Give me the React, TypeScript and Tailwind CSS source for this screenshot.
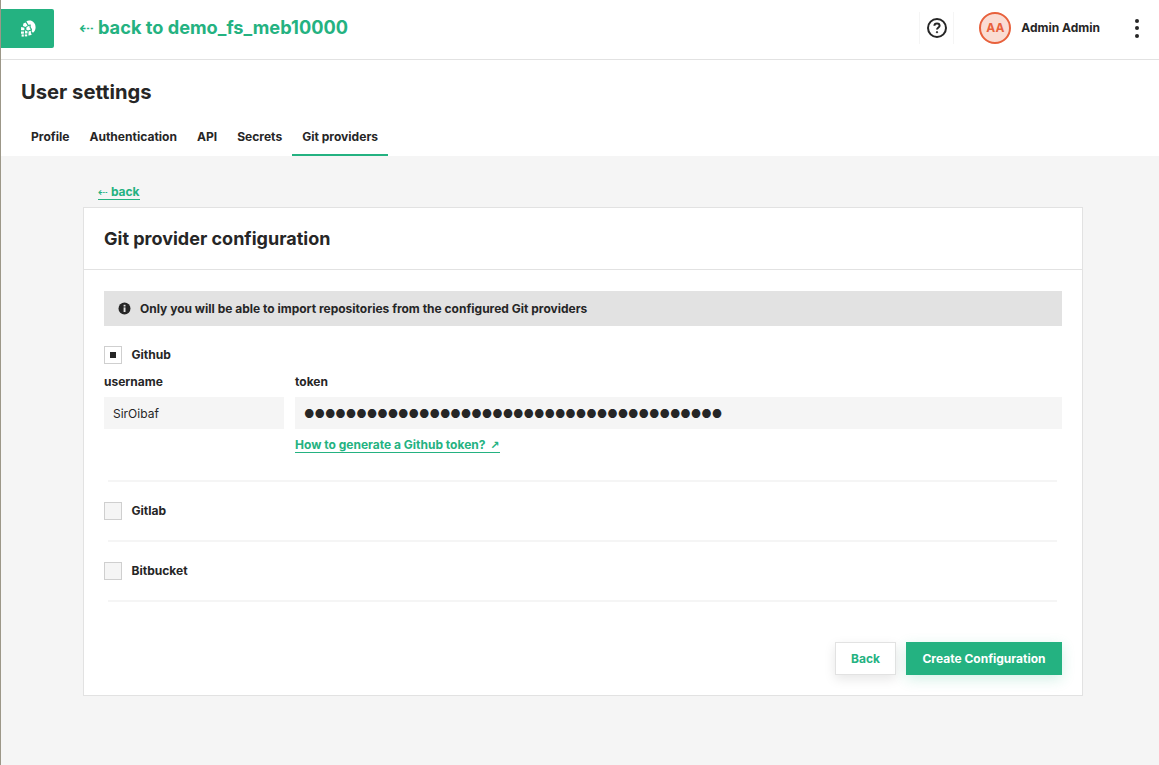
import React from "react";

const tabs = ["Profile", "Authentication", "API", "Secrets", "Git providers"];

function Logo() {
  return (
    <svg width="16" height="17" viewBox="0 0 16 17" fill="#fff">
      <path d="M6.4 1.2C7.6.4 9.4.2 10.8.6 13.6 1.4 15.6 4 15.6 7.2 15.6 9.6 14.6 11.6 13 12.8L11.6 11.6 12 9.2 10.6 7 10.8 4.4 8.4 4.8Z" />
      <path d="M3.4 3.6 5.6 2.4 7.6 5.6 5.4 7 3 6Z" />
      <path d="M6.6 7 9.4 5.8 9.6 7.6 10.8 9.6 8 10.6 6.2 9.4Z" />
      <path d="M1.2 7 4.4 7.8 4.4 10.2 1 10.2Z" />
      <path d="M5.2 10.2 7.6 11.4 7.4 13.4 4.8 13.4Z" />
      <path d="M8.6 11.6 10.8 10.8 11 13.4 12 14.2C11 15 9.8 15.4 8.4 15.6Z" />
      <path d="M1 11.4 4 11.4 3.8 13.8 1 13.8Z" />
      <path d="M1.6 14.4 3.8 14.4 3.8 16.6 1.6 16.6Z" />
      <path d="M4.8 14.4 7.2 14.4 7.2 16.4 4.8 16.4Z" />
    </svg>
  );
}

function Provider({ name, checked }: { name: string; checked?: boolean }) {
  return (
    <div className="flex items-center gap-[9.5px]">
      <span
        className={`grid h-[18px] w-[18px] place-items-center border border-[#cfcfcf] ${
          checked ? "bg-white" : "bg-[#f5f5f5]"
        }`}
      >
        {checked && <span className="h-[6px] w-[6px] bg-[#262626]" />}
      </span>
      <span className="text-[12.05px] leading-[18px] font-bold text-[#262626]">{name}</span>
    </div>
  );
}

export default function App() {
  return (
    <div
      className="flex h-[765px] w-[1159px] flex-col overflow-hidden border-l border-[#9c9788] bg-[#f5f5f5] text-[#262626]"
      style={{ fontFamily: "Inter, 'Liberation Sans', sans-serif" }}
    >
      <header className="flex h-[60px] shrink-0 items-center border-b border-[#e2e2e2] bg-white pb-[3px]">
        <div className="grid h-[39px] w-[53px] place-items-center rounded-r-[2px] bg-[#24b281]">
          <Logo />
        </div>
        <a className="ml-[25px] text-[18.2px] font-bold text-[#24b281]">
          <span className="font-['DejaVu_Sans'] text-[17.5px] leading-none font-normal">⇠</span> back to demo_fs_meb10000
        </a>
        <div className="ml-auto flex h-[32px] w-[35px] items-center justify-center border-x border-[#f5f5f5]">
          <svg width="20" height="20" viewBox="0 0 20 20" fill="none" stroke="#262626">
            <circle cx="10" cy="10" r="9" strokeWidth="2" />
            <path d="M7.4 7.8C7.4 6.3 8.6 5.4 10 5.4S12.6 6.4 12.6 7.8C12.6 9.5 10 9.6 10 11.6" strokeWidth="2" />
            <circle cx="10" cy="14.2" r="0.7" fill="#262626" strokeWidth="0.9" />
          </svg>
        </div>
        <div className="ml-[25px] grid h-8 w-8 place-items-center rounded-full border-2 border-[#e8613c] bg-[#fadcd3] text-xs font-bold text-[#e8613c]">
          AA
        </div>
        <span className="ml-[10px] text-xs font-bold">Admin Admin</span>
        <div className="mr-[20px] ml-[35px] flex flex-col gap-[3.5px]">
          <span className="h-1 w-1 rounded-full bg-[#262626]" />
          <span className="h-1 w-1 rounded-full bg-[#262626]" />
          <span className="h-1 w-1 rounded-full bg-[#262626]" />
        </div>
      </header>

      <div className="h-[96px] shrink-0 bg-white">
        <h1 className="pt-[20px] pl-5 text-[20.2px] leading-6 font-bold">User settings</h1>
        <nav className="mt-[17px] flex pl-5">
          {tabs.map((tab) => (
            <a
              key={tab}
              className={`h-[35px] px-[10px] pt-[8px] text-[12.05px] leading-4 font-bold ${
                tab === "Git providers" ? "border-b-2 border-[#24b281]" : ""
              }`}
            >
              {tab}
            </a>
          ))}
        </nav>
      </div>

      <main className="pt-[29px] pl-[82px]">
        <a className="ml-[15px] block h-[15px] w-fit border-b border-[#24b281] text-xs leading-[14px] font-bold text-[#24b281]">
          <span className="font-['DejaVu_Sans'] text-[12px] leading-none font-normal">⇠</span> back
        </a>
        <section className="mt-[7px] h-[489px] w-[1000px] border border-[#e2e2e2] bg-white">
          <div className="h-[62px] border-b border-[#e2e2e2] pt-[19px] pl-5 text-lg leading-[24px] font-bold">
            Git provider configuration
          </div>
          <div className="px-5 pt-[21px]">
            <div className="flex h-[35px] items-center gap-[9px] bg-[#e2e2e2] pl-[14px] text-xs font-bold">
              <svg width="13" height="13" viewBox="0 0 13 13">
                <circle cx="6.5" cy="6.5" r="6" fill="#262626" />
                <rect x="5.6" y="5.4" width="1.9" height="4.6" fill="#e2e2e2" />
                <rect x="5.6" y="2.8" width="1.9" height="1.7" fill="#e2e2e2" />
              </svg>
              Only you will be able to import repositories from the configured Git providers
            </div>

            <div className="mt-5">
              <Provider name="Github" checked />
            </div>
            <div className="mt-[10px] flex gap-[11px]">
              <div className="w-[180px]">
                <label className="block text-xs leading-4 font-bold">username</label>
                <div className="mt-[7px] flex h-[32px] items-center bg-[#f5f5f5] pt-[2px] pl-[9px] text-xs">SirOibaf</div>
              </div>
              <div className="flex-1">
                <label className="block text-xs leading-4 font-bold">token</label>
                <div className="mt-[7px] flex h-[32px] items-center overflow-hidden bg-[#f5f5f5] pt-[3px] pl-[9px] text-[11.45px]">
                  {"●".repeat(40)}
                </div>
                <a className="mt-[9px] block h-[15px] w-fit border-b border-[#24b281] text-xs leading-[14px] font-bold text-[#24b281]">
                  How to generate a Github token?{" "}
                  <span className="ml-[2px] font-['DejaVu_Sans'] text-[11px] leading-none">↗</span>
                </a>
              </div>
            </div>
            <hr className="mt-[27px] mr-[5px] ml-1 border-t-2 border-[#f5f5f5]" />
            <div className="mt-5">
              <Provider name="Gitlab" />
            </div>
            <hr className="mt-5 mr-[5px] ml-1 border-t-2 border-[#f5f5f5]" />
            <div className="mt-5">
              <Provider name="Bitbucket" />
            </div>
            <hr className="mt-5 mr-[5px] ml-1 border-t-2 border-[#f5f5f5]" />
            <div className="mt-10 flex justify-end gap-[10px]">
              <button className="h-[33px] w-[61px] border border-[#e2e2e2] bg-white text-xs font-bold text-[#24b281] shadow-[0_4px_12px_rgba(0,0,0,0.1)]">
                Back
              </button>
              <button className="h-[33px] w-[156px] bg-[#24b281] text-xs font-bold text-white shadow-[0_4px_14px_rgba(36,178,129,0.2)]">
                Create Configuration
              </button>
            </div>
          </div>
        </section>
      </main>
    </div>
  );
}
